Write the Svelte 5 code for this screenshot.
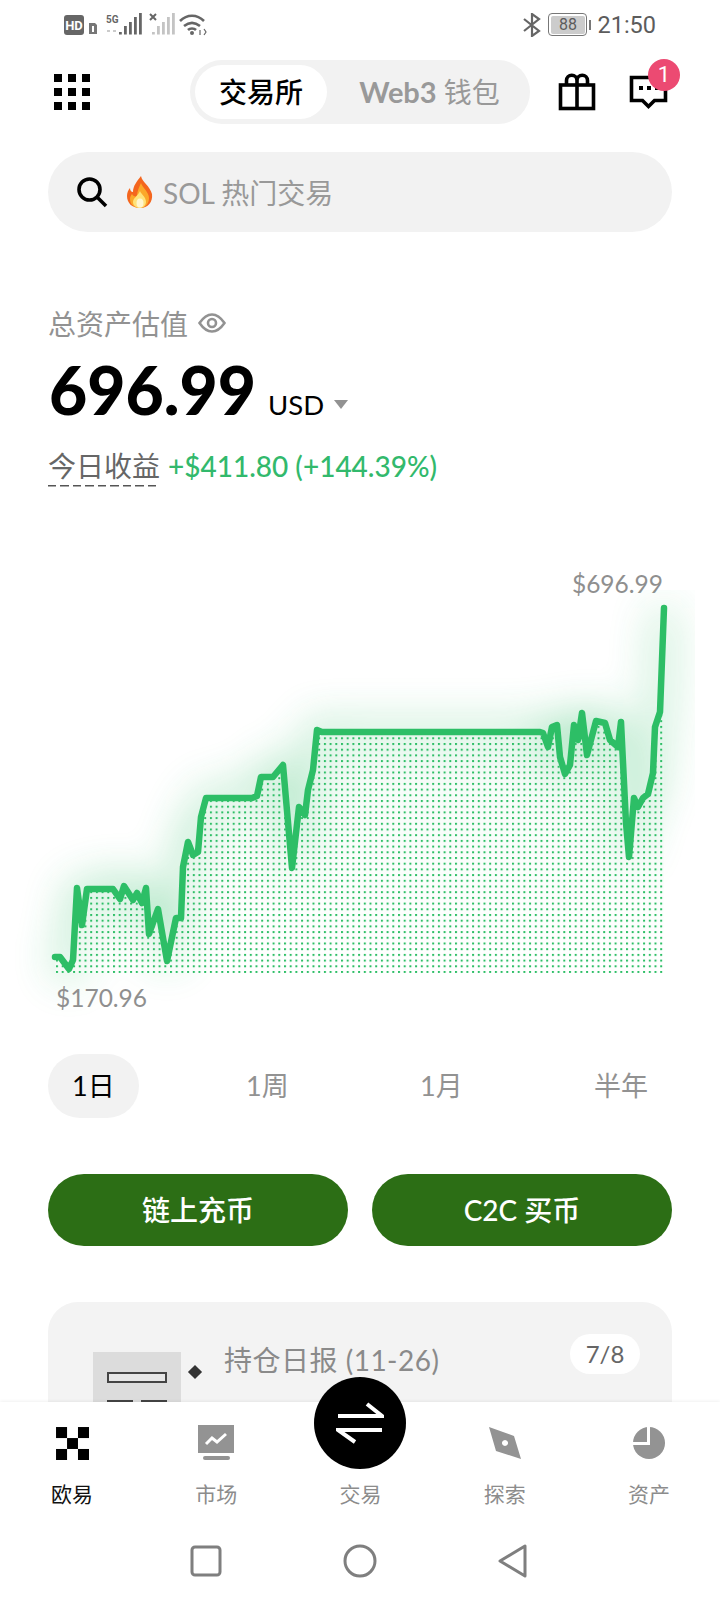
<script>
  const PTS = [
    [55,957],[60,957],[69,969],[73,960],[77,888],[82,925],[87,889],[113,889],[120,899],[124,886],
    [133,900],[137,893],[142,903],[146,888],[149,934],[158,909],[167,961],[176,918],[181,918],[183,867],
    [188,842],[193,855],[198,852],[201,817],[206,798],[252,798],[257,796],[261,777],[273,777],[283,765],
    [292,868],[299,807],[305,815],[308,790],[313,770],[317,730],[322,732],[540,732],[543,733],[548,747],
    [552,727],[557,725],[560,757],[565,774],[570,765],[574,725],[578,740],[582,713],[587,755],[596,721],
    [605,723],[610,740],[618,747],[621,722],[626,823],[629,857],[634,798],[638,807],[643,798],[648,794],
    [653,773],[655,727],[660,712],[664,608],
  ]
  const line = PTS.map((p) => p.join(',')).join(' ')
  const area = `${line} 664,973 56,973`

  const BARS_TOPS = [32, 26, 22, 17, 13]
  const TABS = ['1日', '1周', '1月', '半年']
  const NAV = ['欧易', '市场', '交易', '探索', '资产']
</script>

<div class="page">
  <!-- status bar -->
  <div class="status">
    <svg class="st-left" width="190" height="48" viewBox="50 0 190 48">
      <rect x="64" y="15" width="20" height="20" rx="3" fill="#666" />
      <text x="74" y="30" class="hd">HD</text>
      <path d="M89 23h6l2 2v9h-8z" fill="#777" />
      <rect x="92" y="26" width="2" height="6" fill="#fff" />
      <text x="106" y="23" class="fiveg">5G</text>
      <path d="M107 31h3M113 31h3" stroke="#bbb" stroke-width="1.5" />
      {#each BARS_TOPS as top, i}
        <rect x={119 + i * 5} y={top} width="2.8" height={34.5 - top} fill="#666" />
        <rect x={152 + i * 5} y={top} width="2.8" height={34.5 - top} fill="#c4c4c4" />
      {/each}
      <path d="M150 14l6 6M156 14l-6 6" stroke="#666" stroke-width="2" />
      <path d="M180 21c7-7 17-7 24 0M184 26c5-4 11-4 16 0M188 30c2-2 6-2 8 0" fill="none" stroke="#666" stroke-width="2.6" />
      <circle cx="192" cy="33" r="2" fill="#666" />
      <path d="M200 30v5M204 29l2 3-2 3" fill="none" stroke="#666" stroke-width="1.2" />
    </svg>
    <div class="st-right">
      <svg width="20" height="24" viewBox="0 0 20 24">
        <path d="M2 6l15 12-7 5V1l7 5L2 18" fill="none" stroke="#666" stroke-width="2.2" />
      </svg>
      <div class="battery"><span>88</span></div>
      <span class="batcap"></span>
      <span class="clock">21:50</span>
    </div>
  </div>

  <!-- header -->
  <header class="head">
    <svg class="grid" width="36" height="36" viewBox="0 0 36 36">
      {#each [0, 14, 28] as y}
        {#each [0, 14, 28] as x}
          <rect {x} {y} width="8" height="8" />
        {/each}
      {/each}
    </svg>
    <div class="toggle">
      <div class="tog on">交易所</div>
      <div class="tog off"><b>Web3</b> 钱包</div>
    </div>
    <svg class="gift" width="38" height="38" viewBox="0 0 38 38" fill="none" stroke="#000" stroke-width="3.6">
      <rect x="2.5" y="12" width="33" height="23.5" />
      <path d="M19 12v24M8.5 12V7.5a5 5 0 0 1 10.500 0V12M19 12V7.500a5 5 0 0 1 10.500 0V12" />
    </svg>
    <div class="chat">
      <svg width="40" height="38" viewBox="0 0 40 38" fill="none">
        <path d="M2.500 4.500h34v23h-11l-6 6-6-6h-11z" stroke="#000" stroke-width="3.600" />
        <rect x="10" y="13" width="4" height="4" fill="#000" />
        <rect x="18" y="13" width="4" height="4" fill="#000" />
        <rect x="26" y="13" width="4" height="4" fill="#000" />
      </svg>
      <span class="badge">1</span>
    </div>
  </header>

  <!-- search -->
  <div class="search">
    <svg width="32" height="32" viewBox="0 0 32 32" fill="none" stroke="#000" stroke-width="3.6">
      <circle cx="13.500" cy="13.500" r="10.500" />
      <path d="M21 21l9 9" />
    </svg>
    <svg class="flame" width="26" height="32" viewBox="0 0 26 32">
      <path d="M14 0c1 6 9 10 11 18 1 8-4 14-12 14S0 27 0 20c0-3 1-6 3-8 0 2 1 4 3 4C6 10 10 5 14 0z" fill="#f4661e" />
      <path d="M14 7c1 4 8 9 8 15 0 6-4 10-9 10s-10-3-10-9c0-2 1-4 2-5 1 2 3 3 5 2 0-4 2-9 4-13z" fill="#fba82a" />
      <path d="M13 15c1 3 6 6 6 11 0 3-3 6-6 6s-7-2-7-6c0-4 5-6 7-11z" fill="#ffe27a" />
      <ellipse cx="13" cy="27" rx="3.500" ry="4.500" fill="#fff6d0" />
    </svg>
    <span>SOL 热门交易</span>
  </div>

  <!-- balance -->
  <section class="assets">
    <div class="label">
      总资产估值
      <svg width="28" height="20" viewBox="0 0 28 20" fill="none" stroke="#929292" stroke-width="2.600">
        <path d="M1.500 10C6 3.500 10 1.500 14 1.500S22 3.500 26.500 10C22 16.500 18 18.500 14 18.500S6 16.500 1.500 10z" />
        <circle cx="14" cy="10" r="4" />
      </svg>
    </div>
    <div class="amount">
      <span class="num">696.99</span>
      <span class="cur">USD</span>
      <span class="caret"></span>
    </div>
    <div class="pnl">
      <span class="pnl-label">今日收益</span>
      <span class="pnl-val">+$411.80 (+144.39%)</span>
    </div>
  </section>

  <!-- chart -->
  <section class="chart">
    <div class="hi">$696.99</div>
    <svg class="plot" width="720" height="390" viewBox="0 600 720 390">
      <defs>
        <pattern id="dots" x="56" y="971" width="5.700" height="5.700" patternUnits="userSpaceOnUse">
          <rect width="2" height="2" fill="#2dbe66" />
        </pattern>
        <filter id="glow" x="-20%" y="-20%" width="140%" height="140%">
          <feGaussianBlur stdDeviation="22" />
        </filter>
        <clipPath id="glowclip"><rect x="0" y="590" width="695" height="440" /></clipPath>
        <linearGradient id="fade" x1="0" y1="0" x2="0" y2="1">
          <stop offset="0" stop-color="#2dbe66" stop-opacity="0.08" />
          <stop offset="1" stop-color="#2dbe66" stop-opacity="0" />
        </linearGradient>
      </defs>
      <g clip-path="url(#glowclip)">
        <polyline points={line} fill="none" stroke="#2dbe66" stroke-width="16" opacity="0.42" filter="url(#glow)" />
      </g>
      <polygon points={area} fill="#fff" opacity="0.4" />
      <polygon points={area} fill="url(#fade)" />
      <polygon points={area} fill="url(#dots)" />
      <polyline points={line} fill="none" stroke="#2dbe66" stroke-width="6.500" stroke-linejoin="round" stroke-linecap="round" />
    </svg>
    <div class="lo">$170.96</div>
  </section>

  <!-- range tabs -->
  <div class="tabs">
    {#each TABS as t, i}
      <div class="tab" class:active={i === 0}>{t}</div>
    {/each}
  </div>

  <!-- actions -->
  <div class="actions">
    <div class="btn">链上充币</div>
    <div class="btn">C2C 买币</div>
  </div>

  <!-- promo card -->
  <div class="card">
    <div class="thumb">
      <span class="bar"></span>
      <div class="cells"><i></i><i></i></div>
    </div>
    <span class="diamond"></span>
    <div class="title">持仓日报 (11-26)</div>
    <div class="pager">7/8</div>
  </div>

  <!-- bottom nav floats over the scrolled content -->
  <nav class="bottom">
    <div class="items">
      {#each NAV as label, i}
        <div class="item" class:cur={i === 0}>
          {#if i === 0}
            <svg width="34" height="34" viewBox="0 0 33 33">
              <rect x="1" y="1" width="10.700" height="10.700" />
              <rect x="22.300" y="1" width="10.700" height="10.700" />
              <rect x="11.700" y="11.700" width="10.600" height="10.600" />
              <rect x="1" y="22.300" width="10.700" height="10.700" />
              <rect x="22.300" y="22.300" width="10.700" height="10.700" />
            </svg>
          {:else if i === 1}
            <svg width="38" height="38" viewBox="0 0 38 38">
              <rect x="1" y="1" width="36" height="28" fill="#939393" />
              <path d="M9 20l6-6 5 4 9-8" fill="none" stroke="#fff" stroke-width="3" />
              <rect x="6" y="32" width="27" height="4" rx="2" fill="#939393" />
            </svg>
          {:else if i === 2}
            <div class="ghost"></div>
          {:else if i === 3}
            <svg width="36" height="34" viewBox="0 0 36 34">
              <path fill-rule="evenodd" d="M2 1l25 9 7 23-25-8zM18 14a3 3 0 1 0 0.010 0z" fill="#939393" />
            </svg>
          {:else}
            <svg width="34" height="34" viewBox="0 0 34 34">
              <circle cx="17" cy="17" r="16" fill="#939393" />
              <path d="M16.500 0v17.500H0" fill="none" stroke="#fff" stroke-width="3" />
            </svg>
          {/if}
          <span>{label}</span>
        </div>
      {/each}
    </div>
    <div class="swap">
      <svg width="48" height="42" viewBox="0 0 48 42" fill="none" stroke="#fff" stroke-width="4">
        <path d="M2 14h44L31 2M46 28H2l17 12" />
      </svg>
    </div>
    <div class="sysnav">
      <svg width="32" height="32" viewBox="0 0 32 32" fill="none" stroke="#7f7f7f" stroke-width="3">
        <rect x="2" y="2" width="28" height="28" rx="3" />
      </svg>
      <svg width="34" height="34" viewBox="0 0 34 34" fill="none" stroke="#7f7f7f" stroke-width="3">
        <circle cx="17" cy="17" r="15" />
      </svg>
      <svg width="32" height="34" viewBox="0 0 32 34" fill="none" stroke="#7f7f7f" stroke-width="3" stroke-linejoin="round">
        <path d="M28 2v30L3 17z" />
      </svg>
    </div>
  </nav>
</div>

<style>
  :global(body) {
    margin: 0;
    background: #fff;
  }
  .page {
    position: relative;
    width: 720px;
    height: 1600px;
    overflow: hidden;
    background: #fff;
    font-family: Lato, "Noto Sans CJK SC", sans-serif;
    color: #000;
  }

  .status {
    height: 48px;
    display: flex;
    justify-content: space-between;
  }
  .st-left {
    margin-left: 50px;
  }
  .hd {
    font: 700 13px Roboto, sans-serif;
    fill: #fff;
    text-anchor: middle;
  }
  .fiveg {
    font: 700 10px Roboto, sans-serif;
    fill: #666;
  }
  .st-right {
    display: flex;
    align-items: center;
    padding: 1px 64px 0 0;
    color: #5c5c5c;
    font-family: Roboto, sans-serif;
  }
  .st-right svg {
    margin-right: 6px;
  }
  .battery {
    width: 34px;
    height: 18px;
    border: 1.500px solid #777;
    border-radius: 4px;
    padding: 1.500px;
    display: flex;
  }
  .battery span {
    flex: 1;
    background: #ccc;
    border-radius: 2px;
    font-size: 16px;
    line-height: 18px;
    text-align: center;
  }
  .batcap {
    width: 2px;
    height: 10px;
    margin: 0 6px 0 2px;
    background: #777;
  }
  .clock {
    font-size: 23.500px;
  }

  .head {
    height: 64px;
    margin-top: 12px;
    padding: 0 54px;
    display: flex;
    align-items: center;
  }
  .grid {
    flex: none;
  }
  .toggle {
    width: 340px;
    height: 64px;
    box-sizing: border-box;
    padding: 5px;
    margin: 0 28px 0 100px;
    border-radius: 32px;
    background: #f2f2f2;
    display: flex;
    align-items: center;
    flex: none;
  }
  .tog {
    height: 54px;
    line-height: 54px;
    font-size: 28px;
    text-align: center;
    border-radius: 27px;
  }
  .tog.on {
    width: 132px;
    background: #fff;
    font-weight: 500;
  }
  .tog.off {
    flex: 1;
    padding-left: 7px;
    color: #999;
  }
  .tog.off b {
    font-size: 29px;
  }
  .gift {
    flex: none;
  }
  .chat {
    position: relative;
    flex: none;
    margin-left: 33px;
    height: 38px;
  }
  .badge {
    position: absolute;
    left: 19px;
    top: -14px;
    width: 32px;
    height: 32px;
    border-radius: 50%;
    background: #ec4a72;
    color: #fff;
    font: 22px/32px Roboto, sans-serif;
    text-align: center;
  }

  .search {
    margin: 28px 48px 0;
    height: 80px;
    padding-left: 28px;
    border-radius: 40px;
    background: #f2f2f2;
    display: flex;
    align-items: center;
    font-size: 28px;
    color: #999;
  }
  .flame {
    margin: 0 10px 0 19px;
  }

  .assets {
    margin: 71px 48px 0;
  }
  .label {
    display: flex;
    align-items: center;
    gap: 10px;
    height: 40px;
    font-size: 28px;
    color: #929292;
  }
  .amount {
    display: flex;
    align-items: baseline;
    height: 84px;
    margin-top: 5px;
  }
  .num {
    font-size: 66px;
    line-height: 84px;
    font-weight: 900;
    padding-left: 1px;
  }
  .cur {
    margin-left: 12px;
    font-size: 27.500px;
  }
  .caret {
    width: 0;
    height: 0;
    margin-left: 10px;
    border: 7px solid transparent;
    border-top: 9px solid #929292;
    border-bottom: 0;
    align-self: center;
    margin-top: 28px;
  }
  .pnl {
    display: flex;
    align-items: baseline;
    gap: 8px;
    margin-top: 15px;
    font-size: 28px;
  }
  .pnl-label {
    color: #666;
    line-height: 38px;
    padding-bottom: 1.500px;
    background: repeating-linear-gradient(90deg, #555 0 8px, transparent 8px 12.500px) bottom / 100% 1.500px no-repeat;
  }
  .pnl-val {
    color: #32b96c;
    font-weight: 500;
  }

  .chart {
    margin-top: 81px;
  }
  .hi {
    padding-right: 57px;
    text-align: right;
    font-size: 24.500px;
    line-height: 32px;
    color: #8f8f8f;
  }
  .plot {
    display: block;
    overflow: visible;
  }
  .lo {
    position: relative;
    margin-top: -8px;
    padding-left: 56px;
    font-size: 24.500px;
    line-height: 32px;
    color: #8f8f8f;
  }

  .tabs {
    margin: 40px 48px 0;
    display: flex;
    justify-content: space-between;
  }
  .tab {
    height: 64px;
    padding: 0 24px;
    border-radius: 32px;
    font-size: 27px;
    line-height: 64px;
    color: #929292;
  }
  .tab.active {
    background: #f2f2f2;
    color: #000;
  }

  .actions {
    margin: 56px 48px 0;
    display: grid;
    grid-template-columns: 1fr 1fr;
    gap: 24px;
  }
  .btn {
    height: 72px;
    border-radius: 36px;
    background: #2c6e15;
    color: #fff;
    font-size: 28px;
    font-weight: 500;
    line-height: 72px;
    text-align: center;
  }

  .card {
    position: relative;
    margin: 56px 48px 0;
    height: 200px;
    box-sizing: border-box;
    padding: 32px 0 0 176px;
    border-radius: 30px;
    background: #f3f3f3;
  }
  .thumb {
    position: absolute;
    left: 45px;
    top: 50px;
    width: 88px;
    height: 120px;
    box-sizing: border-box;
    padding: 20px 14px 0;
    background: #dcdcdc;
  }
  .bar {
    display: block;
    height: 11px;
    box-sizing: border-box;
    border: 2px solid #444;
    background: #e6e6e6;
  }
  .cells {
    display: flex;
    gap: 8px;
    margin-top: 17px;
  }
  .cells i {
    flex: 1;
    height: 12px;
    background: #444;
  }
  .diamond {
    position: absolute;
    left: 142px;
    top: 65px;
    width: 10px;
    height: 10px;
    background: #333;
    transform: rotate(45deg);
  }
  .title {
    font-size: 28px;
    line-height: 52px;
    letter-spacing: 0.500px;
    color: #8a8a8a;
  }
  .pager {
    position: absolute;
    right: 32px;
    top: 32px;
    width: 70px;
    height: 40px;
    border-radius: 20px;
    background: #fff;
    font-size: 24px;
    line-height: 40px;
    text-align: center;
    color: #666;
  }

  .bottom {
    position: absolute;
    left: 0;
    right: 0;
    bottom: 0;
    height: 198px;
    background: #fff;
    box-shadow: 0 -1px 3px rgba(0, 0, 0, 0.06);
  }
  .items {
    display: flex;
    padding: 22px 0 0 1px;
    height: 92px;
    box-sizing: border-box;
    justify-content: space-between;
  }
  .item {
    width: 144px;
    margin: 0 -1px;
    display: flex;
    flex-direction: column;
    align-items: center;
    font-size: 21px;
    color: #8c8c8c;
  }
  .item svg,
  .ghost {
    height: 38px;
    flex: none;
  }
  .item span {
    margin-top: 18px;
    line-height: 28px;
  }
  .item.cur {
    color: #111;
  }
  .swap {
    position: absolute;
    left: 314px;
    top: -25px;
    width: 92px;
    height: 92px;
    border-radius: 50%;
    background: #000;
    display: flex;
    align-items: center;
    justify-content: center;
  }
  .sysnav {
    position: absolute;
    left: 190px;
    right: 191px;
    bottom: 22px;
    display: flex;
    align-items: center;
    justify-content: space-between;
  }
</style>
